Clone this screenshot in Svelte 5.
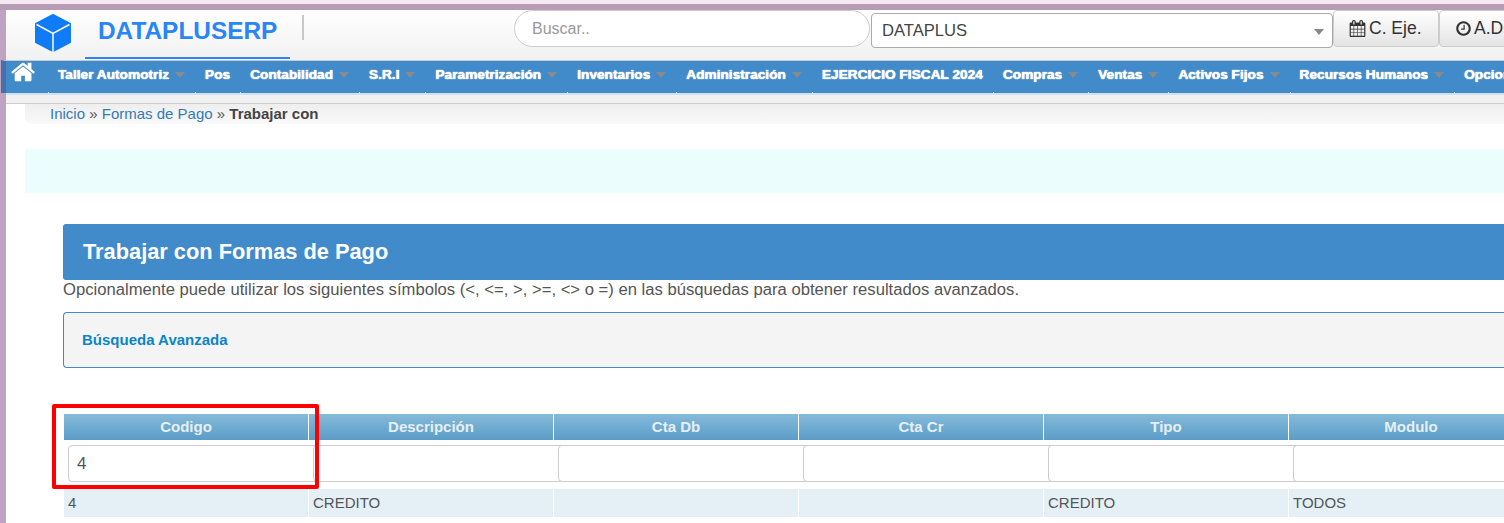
<script>
	const menu = [
		{ name: 'Taller Automotriz', sub: true },
		{ name: 'Pos', sub: false },
		{ name: 'Contabilidad', sub: true },
		{ name: 'S.R.I', sub: true },
		{ name: 'Parametrización', sub: true },
		{ name: 'Inventarios', sub: true },
		{ name: 'Administración', sub: true },
		{ name: 'EJERCICIO FISCAL 2024', sub: false },
		{ name: 'Compras', sub: true },
		{ name: 'Ventas', sub: true },
		{ name: 'Activos Fijos', sub: true },
		{ name: 'Recursos Humanos', sub: true },
		{ name: 'Opciones', sub: true }
	];
	const columns = ['Codigo', 'Descripción', 'Cta Db', 'Cta Cr', 'Tipo', 'Modulo'];
	const filters = ['4', '', '', '', '', ''];
	const row = ['4', 'CREDITO', '', '', 'CREDITO', 'TODOS'];
</script>

<div class="page">
	<div class="top-band"></div>
	<header class="topbar">
		<svg class="logo" viewBox="0 0 36 38" width="36" height="38" aria-hidden="true">
			<path d="M18 .8 35.200 9.800V28.200L18 37.200.8 28.200V9.800Z" fill="#0f7bf7" stroke="#0f7bf7" stroke-width="1.600" stroke-linejoin="round" />
			<path d="M1.500 10.500 18 19.500 34.500 10.500M18 19.500V38" fill="none" stroke="#fff" stroke-width="1.500" />
		</svg>
		<div class="brand">DATAPLUSERP</div>
		<div class="divider"></div>
		<div class="search">Buscar..</div>
		<div class="company">
			<span>DATAPLUS</span>
			<i class="select-caret"></i>
		</div>
		<button class="tool first">
			<svg viewBox="0 0 1792 1792" width="17" height="17" aria-hidden="true"><path fill="#333" d="M192 1664h288v-288h-288v288zm352 0h320v-288h-320v288zm-352-352h288v-320h-288v320zm352 0h320v-320h-320v320zm-352-384h288v-288h-288v288zm736 736h320v-288h-320v288zm-384-736h320v-288h-320v288zm768 736h288v-288h-288v288zm-384-352h320v-320h-320v320zm-352-864v-288q0-13-9.500-22.500t-22.500-9.500h-64q-13 0-22.500 9.500t-9.500 22.500v288q0 13 9.500 22.500t22.500 9.500h64q13 0 22.500-9.500t9.500-22.500zm736 864h288v-320h-288v320zm-384-384h320v-288h-320v288zm384 0h288v-288h-288v288zm32-480v-288q0-13-9.500-22.500t-22.500-9.500h-64q-13 0-22.500 9.500t-9.500 22.500v288q0 13 9.500 22.500t22.500 9.500h64q13 0 22.500-9.500t9.500-22.500zm384-64v1280q0 52-38 90t-90 38h-1408q-52 0-90-38t-38-90v-1280q0-52 38-90t90-38h128v-96q0-66 47-113t113-47h64q66 0 113 47t47 113v96h384v-96q0-66 47-113t113-47h64q66 0 113 47t47 113v96h128q52 0 90 38t38 90z" /></svg>
			C. Eje.
		</button>
		<button class="tool">
			<svg viewBox="0 0 1792 1792" width="17" height="17" aria-hidden="true"><path fill="#333" d="M1024 544v448q0 14-9 23t-23 9h-320q-14 0-23-9t-9-23v-64q0-14 9-23t23-9h224v-352q0-14 9-23t23-9h64q14 0 23 9t9 23zm416 352q0-148-73-273t-198-198-273-73-273 73-198 198-73 273 73 273 198 198 273 73 273-73 198-198 73-273zm224 0q0 209-103 385.500t-279.500 279.500-385.500 103-385.500-103-279.500-279.500-103-385.500 103-385.500 279.500-279.500 385.500-103 385.500 103 279.500 279.500 103 385.500z" /></svg>
			A.D
		</button>
	</header>

	<nav class="menubar">
		<svg class="home" viewBox="0 0 1792 1792" width="26" height="26" aria-hidden="true"><path fill="#fff" d="M1408 992v480q0 26-19 45t-45 19h-384v-384h-256v384h-384q-26 0-45-19t-19-45v-480q0-1 .5-3t.5-3l575-474 575 474q1 2 1 6zm223-69l-62 74q-8 9-21 11h-3q-13 0-21-7l-692-577-692 577q-12 8-24 7-13-2-21-11l-62-74q-8-10-7-23.500t11-21.500l719-599q32-26 76-26t76 26l244 204v-195q0-14 9-23t23-9h192q14 0 23 9t9 23v408l219 182q10 8 11 21.500t-7 23.500z" /></svg>
		{#each menu as item}
			<a class="menu-item" href="#top">
				{item.name}
				{#if item.sub}<i class="caret"></i>{/if}
			</a>
		{/each}
	</nav>
	<div class="under-nav"></div>

	<main class="content">
		<div class="breadcrumb">
			<a href="#top">Inicio</a> » <a href="#top">Formas de Pago</a> » <strong>Trabajar con</strong>
		</div>
		<div class="notice"></div>

		<section class="panel">
			<h1 class="panel-title">Trabajar con Formas de Pago</h1>
			<p class="hint">Opcionalmente puede utilizar los siguientes símbolos (&lt;, &lt;=, &gt;, &gt;=, &lt;&gt; o =) en las búsquedas para obtener resultados avanzados.</p>
			<div class="advanced"><a href="#top">Búsqueda Avanzada</a></div>

			<div class="grid">
				{#each columns as col}
					<div class="head">{col}</div>
				{/each}
				{#each filters as value}
					<div class="filter"><input type="text" {value} /></div>
				{/each}
				{#each row as cell}
					<div class="cell">{cell}</div>
				{/each}
				<div class="highlight"></div>
			</div>
		</section>
	</main>
</div>

<style>
	:global(body) {
		margin: 0;
		overflow: hidden;
		background: #fff;
		font-family: "Liberation Sans", Arial, sans-serif;
	}
	.page {
		width: 1504px;
		height: 523px;
		overflow: hidden;
		box-sizing: border-box;
		padding-left: 6px;
		background: #fff;
		box-shadow: inset 6px 0 0 #c0a3c0;
	}
	.top-band {
		height: 4px;
		margin: 0 0 0 -6px;
		background: #f7e9f4;
		border-bottom: 6px solid #b89cb6;
	}
	.topbar {
		display: flex;
		align-items: flex-start;
		height: 50px;
		width: 1600px;
		background: linear-gradient(#fff, #f1f1f1);
	}
	.logo {
		margin: 4px 0 0 29px;
		flex: none;
	}
	.brand {
		width: 205px;
		height: 49px;
		margin-left: 14px;
		box-sizing: border-box;
		padding: 6px 0 0 13px;
		border-bottom: 2px solid #2a85f5;
		color: #2a85f5;
		font-size: 24.4px;
		font-weight: 700;
		line-height: 30px;
		flex: none;
	}
	.divider {
		width: 2px;
		height: 25px;
		margin: 5px 0 0 12px;
		background: #c8c8c8;
		flex: none;
	}
	.search {
		width: 356px;
		height: 37px;
		margin-left: 210px;
		box-sizing: border-box;
		padding-left: 17px;
		border: 1px solid #ccc;
		border-radius: 19px;
		background: #fff;
		color: #999;
		font-size: 16px;
		line-height: 35px;
		flex: none;
	}
	.company {
		display: flex;
		align-items: center;
		justify-content: space-between;
		width: 462px;
		height: 35px;
		margin: 3px 0 0 1px;
		box-sizing: border-box;
		padding: 0 8px 0 10px;
		border: 1px solid #aaa;
		border-radius: 4px;
		background: #fff;
		color: #444;
		font-size: 16.6px;
		flex: none;
	}
	.select-caret {
		width: 0;
		height: 0;
		margin-top: 2px;
		border-top: 6px solid #888;
		border-left: 5px solid transparent;
		border-right: 5px solid transparent;
	}
	.tool {
		display: flex;
		align-items: center;
		gap: 2px;
		width: 106px;
		height: 37px;
		padding: 0 0 0 15px;
		border: 1px solid #ccc;
		border-radius: 4px;
		background: linear-gradient(#fff, #e4e4e4);
		color: #333;
		font-family: inherit;
		font-size: 17.5px;
		flex: none;
	}
	.tool.first {
		gap: 3px;
		margin-left: 0;
		padding-left: 15px;
	}
	.menubar {
		display: flex;
		align-items: flex-start;
		width: 1600px;
		height: 33px;
		margin-left: -5px;
		box-sizing: border-box;
		border-top: 1px solid #c3ccd4;
		border-left: 5px solid #4a6fa8;
		background: #428bca;
	}
	.home {
		margin: -2px 11px 0 5px;
		flex: none;
	}
	.menu-item {
		position: relative;
		display: flex;
		align-items: center;
		height: 27px;
		padding: 0 10px;
		color: #fff;
		font-size: 13.7px;
		font-weight: 700;
		text-decoration: none;
		text-shadow: 0 0 1px #fff, 0 0 1px #fff;
		white-space: nowrap;
		flex: none;
	}
	.menu-item::after {
		content: "";
		position: absolute;
		left: 0;
		top: 31px;
		width: 1px;
		height: 2px;
		background: #dfeaf3;
	}
	.caret {
		width: 0;
		height: 0;
		margin-left: 6px;
		border-top: 6px solid #8a8a8a;
		border-left: 5px solid transparent;
		border-right: 5px solid transparent;
	}
	.under-nav {
		height: 8px;
		border-top: 2px solid #cfe3ee;
		border-bottom: 1px solid #ccc;
		background: #f1f1f1;
	}
	.content {
		padding-left: 19px;
		width: 1600px;
	}
	.breadcrumb {
		height: 20px;
		padding-left: 25px;
		border-radius: 0 0 0 6px;
		background: linear-gradient(#eee, #fafafa);
		color: #555;
		font-size: 15px;
		line-height: 20px;
	}
	.breadcrumb a {
		color: #337ab7;
		text-decoration: none;
	}
	.breadcrumb strong {
		color: #444;
	}
	.notice {
		height: 44px;
		margin-top: 25px;
		background: #ecfdfd;
	}
	.panel {
		margin: 31px 0 0 38px;
	}
	.panel-title {
		height: 56px;
		margin: 0;
		padding-left: 20px;
		border-radius: 3px 0 0 3px;
		background: #428bca;
		color: #fff;
		font-size: 21.8px;
		font-weight: 700;
		line-height: 55px;
	}
	.hint {
		margin: 0;
		color: #555;
		font-size: 16.65px;
		line-height: 20px;
	}
	.advanced {
		height: 56px;
		margin-top: 12px;
		box-sizing: border-box;
		padding-left: 18px;
		border: 1px solid #428bca;
		border-right: 0;
		border-radius: 4px 0 0 4px;
		background: #f4f4f4;
		font-size: 15px;
		font-weight: 700;
		line-height: 54px;
	}
	.advanced a {
		color: #0a84c6;
		text-decoration: none;
	}
	.grid {
		position: relative;
		display: grid;
		grid-template-columns: repeat(6, 244px);
		column-gap: 1px;
		margin: 46px 0 0 1px;
	}
	.head {
		height: 26px;
		background: linear-gradient(#86bad9, #5a9dc8);
		color: #e6eff5;
		font-size: 15px;
		font-weight: 700;
		line-height: 25px;
		text-align: center;
	}
	.filter {
		height: 49px;
		box-sizing: border-box;
		padding: 5px 0 0 4px;
	}
	.filter input {
		display: block;
		width: calc(100% + 12px);
		height: 37px;
		margin: 0;
		box-sizing: border-box;
		padding: 0 8px;
		border: 1px solid #ccc;
		border-radius: 4px;
		background: #fff;
		color: #555;
		font-family: inherit;
		font-size: 17px;
	}
	.cell {
		height: 28px;
		padding-left: 4px;
		background: #e4f0f5;
		color: #555;
		font-size: 15px;
		line-height: 28px;
	}
	.highlight {
		position: absolute;
		left: -12px;
		top: -10px;
		width: 267px;
		height: 85px;
		box-sizing: border-box;
		border: 4px solid #f00;
		border-radius: 2px;
		pointer-events: none;
	}
</style>
